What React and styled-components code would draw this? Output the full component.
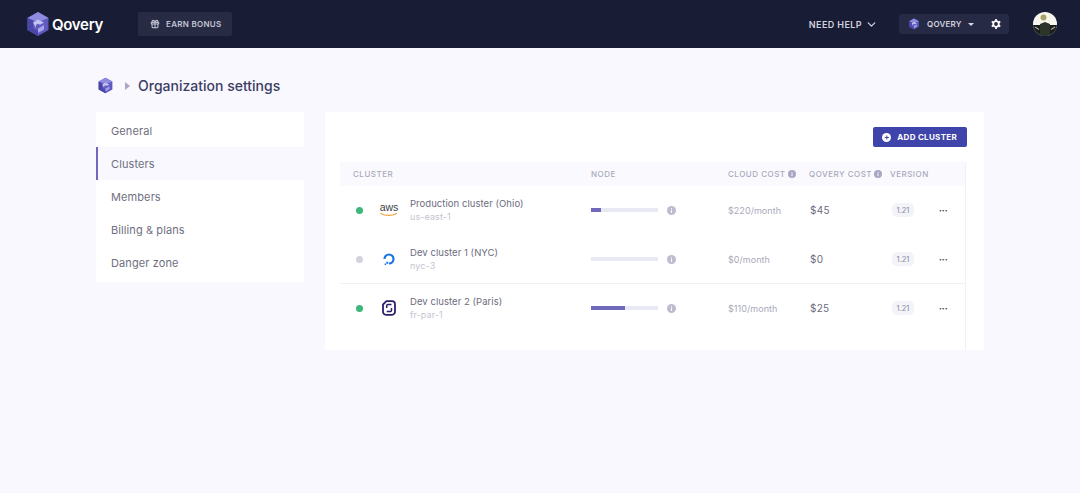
import React from 'react'
import styled, { createGlobalStyle } from 'styled-components'
import { ChevronDown, Gift } from 'lucide-react'

const GlobalStyle = createGlobalStyle`
    html, body {
        margin: 0;
        background: #f8f8fe;
        font-family: Inter, "Open Sans", sans-serif;
    }
    * { box-sizing: border-box; }
`

const clusters = [
    { name: 'Production cluster (Ohio)', region: 'us-east-1', on: true, provider: 'aws', load: 15, cloud: '$220/month', qovery: '$45' },
    { name: 'Dev cluster 1 (NYC)', region: 'nyc-3', on: false, provider: 'do', load: 0, cloud: '$0/month', qovery: '$0', divider: true },
    { name: 'Dev cluster 2 (Paris)', region: 'fr-par-1', on: true, provider: 'scw', load: 50, cloud: '$110/month', qovery: '$25' },
]

const menu = ['General', 'Clusters', 'Members', 'Billing & plans', 'Danger zone']

function QoveryLogo({ size }) {
    return (
        <svg width={size} height={size} viewBox="0 0 26 26">
            <path d="M13 1 23.500 7v12L13 25 2.500 19V7z" fill="#5f5abf" />
            <path d="M13 1 23.500 7 13 11 2.500 7z" fill="#8f8be0" />
            <path d="M2.500 7 8 9.500v8L13 20v5L2.500 19z" fill="#4a46a8" />
            <path d="M8 11.500l5-3 6 3-4 2.200-2-1-2 1.300v3z" fill="#c4c1f0" />
            <path d="M13 17.500l6-3.500v4.500l-6 3.500z" fill="#a9a5ea" />
        </svg>
    )
}

function AwsLogo() {
    return (
        <svg width="20" height="16" viewBox="0 0 20 16">
            <text x="10" y="9" textAnchor="middle" fontFamily="Liberation Sans, sans-serif" fontSize="10.500" fill="#3c3c48">aws</text>
            <path d="M2 11.500c4.500 2.600 11 2.600 15.500 0" fill="none" stroke="#f0a33b" strokeWidth="1.200" strokeLinecap="round" />
        </svg>
    )
}

function OceanLogo() {
    return (
        <svg width="14" height="14" viewBox="0 0 14 14">
            <path d="M7 11.500A4.500 4.500 0 1 0 2.500 7" fill="none" stroke="#1a74e8" strokeWidth="2.200" />
            <path d="M4.300 9.800h2v2h-2zM2.600 11.500h1.500V13H2.600z" fill="#1a74e8" />
        </svg>
    )
}

function ScalewayLogo() {
    return (
        <svg width="14" height="16" viewBox="0 0 14 16">
            <path d="M4.500 1.200h5.500a3 3 0 0 1 3 3v7.600a3 3 0 0 1-3 3H4a3 3 0 0 1-3-3V4.500z" fill="none" stroke="#2c1f6b" strokeWidth="1.800" />
            <path d="M9.500 4.500H6a1.300 1.300 0 0 0-1.300 1.300V8M4.700 11.500h3.500a1.300 1.300 0 0 0 1.300-1.300V8" fill="none" stroke="#2c1f6b" strokeWidth="1.500" />
        </svg>
    )
}

const logos = { aws: <AwsLogo />, do: <OceanLogo />, scw: <ScalewayLogo /> }

function InfoIcon({ size = 9, color = '#a9a6c4' }) {
    return (
        <svg width={size} height={size} viewBox="0 0 10 10">
            <circle cx="5" cy="5" r="5" fill={color} />
            <rect x="4.400" y="4.300" width="1.200" height="3.400" fill="#fff" />
            <rect x="4.400" y="2.400" width="1.200" height="1.200" fill="#fff" />
        </svg>
    )
}

function GearIcon() {
    return (
        <svg width="10" height="10" viewBox="0 0 10 10">
            <circle cx="5" cy="5" r="2.800" fill="none" stroke="#fff" strokeWidth="1.800" />
            <path d="M5 0v2M5 8v2M0.700 2.500l1.700 1M7.600 6.500l1.700 1M0.700 7.500l1.700-1M7.600 3.500l1.700-1" stroke="#fff" strokeWidth="1.700" />
        </svg>
    )
}

function Avatar() {
    return (
        <svg width="24" height="24" viewBox="0 0 24 24">
            <defs>
                <clipPath id="avatar-clip"><circle cx="12" cy="12" r="12" /></clipPath>
            </defs>
            <g clipPath="url(#avatar-clip)">
                <rect width="24" height="24" fill="#f7f7ef" />
                <rect y="13" width="24" height="11" fill="#1a1e1c" />
                <path d="M7 24V12l5-2 5 2v12z" fill="#2d352b" />
                <circle cx="10.500" cy="5.500" r="3" fill="#a8a468" />
                <path d="M2 15l4 2.500M22 15l-4 2.500" stroke="#aeae9c" strokeWidth="1.100" />
            </g>
        </svg>
    )
}

function App() {
    return (
        <>
            <GlobalStyle />
            <Header>
                <Brand>
                    <QoveryLogo size={26} />
                    <BrandName>Qovery</BrandName>
                </Brand>
                <BonusButton><Gift size={10} strokeWidth={2.500} />EARN BONUS</BonusButton>
                <HeaderRight>
                    <HelpLink>NEED HELP <ChevronDown size={13} strokeWidth={2.400} /></HelpLink>
                    <OrgSwitch>
                        <QoveryLogo size={12} />
                        <OrgName>QOVERY</OrgName>
                        <Caret />
                        <GearIcon />
                    </OrgSwitch>
                    <Avatar />
                </HeaderRight>
            </Header>

            <Main>
                <Breadcrumb>
                    <QoveryLogo size={17} />
                    <CrumbArrow />
                    <Title>Organization settings</Title>
                </Breadcrumb>

                <Columns>
                    <Sidebar>
                        {menu.map((item) => (
                            <MenuItem key={item} $active={item === 'Clusters'}>{item}</MenuItem>
                        ))}
                    </Sidebar>

                    <Card>
                        <CardTop>
                            <AddButton><PlusDot>+</PlusDot>ADD CLUSTER</AddButton>
                        </CardTop>
                        <Table>
                            <HeadRow>
                                <span>CLUSTER</span>
                                <span>NODE</span>
                                <HeadCell>CLOUD COST<InfoIcon size={8} /></HeadCell>
                                <HeadCell>QOVERY COST<InfoIcon size={8} /></HeadCell>
                                <span>VERSION</span>
                            </HeadRow>
                            {clusters.map((c) => (
                                <Row key={c.name} $divider={c.divider}>
                                    <ClusterCell>
                                        <StatusDot $on={c.on} />
                                        <ProviderLogo>{logos[c.provider]}</ProviderLogo>
                                        <div>
                                            <ClusterName>{c.name}</ClusterName>
                                            <Region>{c.region}</Region>
                                        </div>
                                    </ClusterCell>
                                    <NodeCell>
                                        <Bar><BarFill style={{ width: `${c.load}%` }} /></Bar>
                                        <InfoIcon size={9} color="#bdbbd0" />
                                    </NodeCell>
                                    <CloudCost>{c.cloud}</CloudCost>
                                    <QoveryCost>{c.qovery}</QoveryCost>
                                    <VersionCell>
                                        <Version>1.21</Version>
                                        <Dots>•••</Dots>
                                    </VersionCell>
                                </Row>
                            ))}
                        </Table>
                    </Card>
                </Columns>
            </Main>
        </>
    )
}

const Header = styled.header`
    display: flex;
    align-items: center;
    height: 48px;
    padding: 0 23px 0 25px;
    background: #191c35;
`

const Brand = styled.div`
    display: flex;
    align-items: center;
    gap: 1px;
    width: 113px;
`

const BrandName = styled.span`
    font-size: 15px;
    font-weight: 600;
    letter-spacing: -0.3px;
    color: #fff;
`

const BonusButton = styled.div`
    display: flex;
    align-items: center;
    gap: 6px;
    width: 94px;
    height: 24px;
    padding-left: 12px;
    border-radius: 2px;
    background: #282b44;
    color: #c3c4d4;
    font-size: 8px;
    font-weight: 600;
    letter-spacing: 0.3px;
`

const HeaderRight = styled.div`
    display: flex;
    align-items: center;
    margin-left: auto;
`

const HelpLink = styled.div`
    display: flex;
    align-items: center;
    gap: 3px;
    margin-right: 21px;
    color: #d0d1de;
    font-size: 9px;
    font-weight: 600;
    letter-spacing: 0.4px;
`

const OrgSwitch = styled.div`
    display: flex;
    align-items: center;
    width: 110px;
    height: 20px;
    margin-right: 24px;
    padding-left: 9px;
    border-radius: 3px;
    background: #272a45;
`

const OrgName = styled.span`
    margin-left: 7px;
    color: #d0d1de;
    font-size: 8px;
    font-weight: 600;
    letter-spacing: 0.2px;
`

const Caret = styled.span`
    width: 0;
    height: 0;
    margin: 0 17px 0 6px;
    border-left: 3px solid transparent;
    border-right: 3px solid transparent;
    border-top: 3px solid #d5d6e2;
`

const Main = styled.main`
    min-height: 445px;
    padding: 29px 96px 0;
    background: #f8f8fe;
`

const Breadcrumb = styled.div`
    display: flex;
    align-items: center;
    height: 17px;
    padding-left: 1px;
`

const CrumbArrow = styled.span`
    width: 0;
    height: 0;
    margin: 0 8px 0 11px;
    border-top: 4px solid transparent;
    border-bottom: 4px solid transparent;
    border-left: 5px solid #a9a7c4;
`

const Title = styled.h1`
    margin: 0;
    color: #3c3d63;
    font-size: 14px;
    font-weight: 500;
`

const Columns = styled.div`
    display: flex;
    align-items: flex-start;
    gap: 21px;
    margin-top: 18px;
`

const Sidebar = styled.nav`
    flex: 0 0 208px;
    padding: 2px 0 3px;
    background: #fff;
`

const MenuItem = styled.div`
    display: flex;
    align-items: center;
    height: 33px;
    padding-left: ${(p) => (p.$active ? '13px' : '15px')};
    border-left: ${(p) => (p.$active ? '2px solid #6f68bb' : 'none')};
    background: ${(p) => (p.$active ? '#f8f8fe' : '#fff')};
    color: #6f6f80;
    font-size: 11px;
    letter-spacing: 0.1px;
`

const Card = styled.section`
    width: 659px;
    height: 238px;
    padding: 15px 18px 0 15px;
    background: #fff;
`

const CardTop = styled.div`
    display: flex;
    justify-content: flex-end;
    height: 35px;
    margin-right: -1px;
`

const AddButton = styled.div`
    display: flex;
    align-items: center;
    gap: 6px;
    height: 20px;
    padding: 0 10px 0 9px;
    border-radius: 2px;
    background: #3f44ab;
    color: #fff;
    font-size: 8px;
    font-weight: 700;
    letter-spacing: 0.3px;
`

const PlusDot = styled.span`
    display: flex;
    align-items: center;
    justify-content: center;
    width: 9px;
    height: 9px;
    border-radius: 50%;
    background: #fff;
    color: #3f44ab;
    font-size: 8px;
    line-height: 1;
`

const Table = styled.div`
    height: 188px;
    border-right: 1px solid #f1f1f8;
`

const columns = '238px 137px 81px 81px 1fr'

const HeadRow = styled.div`
    display: grid;
    grid-template-columns: ${columns};
    align-items: center;
    height: 24px;
    padding-left: 13px;
    background: #fafafe;
    color: #a9a9bd;
    font-size: 8px;
    font-weight: 500;
    letter-spacing: 0.5px;
`

const HeadCell = styled.span`
    display: flex;
    align-items: center;
    gap: 2px;
`

const Row = styled.div`
    display: grid;
    grid-template-columns: ${columns};
    align-items: center;
    height: 49px;
    padding-left: 13px;
    border-bottom: 1px solid ${(p) => (p.$divider ? '#f0f0f6' : 'transparent')};
`

const ClusterCell = styled.div`
    display: flex;
    align-items: center;
`

const StatusDot = styled.span`
    width: 7px;
    height: 7px;
    margin-left: 3px;
    border-radius: 50%;
    background: ${(p) => (p.$on ? '#3cb878' : '#d3d3df')};
`

const ProviderLogo = styled.span`
    display: flex;
    justify-content: center;
    width: 20px;
    margin: 0 11px 0 16px;
`

const ClusterName = styled.div`
    color: #6c6c7e;
    font-size: 9.500px;
    letter-spacing: 0.05px;
`

const Region = styled.div`
    margin-top: 2px;
    color: #c4c4d0;
    font-size: 9px;
    letter-spacing: 0.1px;
`

const NodeCell = styled.div`
    display: flex;
    align-items: center;
    gap: 9px;
`

const Bar = styled.div`
    width: 67px;
    height: 4px;
    background: #e9e9f3;
`

const BarFill = styled.div`
    height: 100%;
    background: #6f68bb;
`

const CloudCost = styled.span`
    color: #a9a9b9;
    font-size: 9px;
    letter-spacing: 0.05px;
`

const QoveryCost = styled.span`
    padding-left: 1px;
    color: #6c6c7e;
    font-size: 10px;
    letter-spacing: 0.3px;
`

const VersionCell = styled.div`
    display: flex;
    align-items: center;
`

const Version = styled.span`
    display: flex;
    align-items: center;
    justify-content: center;
    width: 22px;
    height: 14px;
    margin: 0 25px 0 2px;
    border-radius: 5px;
    background: #f3f3fa;
    color: #8c8ca0;
    font-size: 7.500px;
`

const Dots = styled.span`
    color: #3f3f52;
    font-size: 5px;
`

export default App
